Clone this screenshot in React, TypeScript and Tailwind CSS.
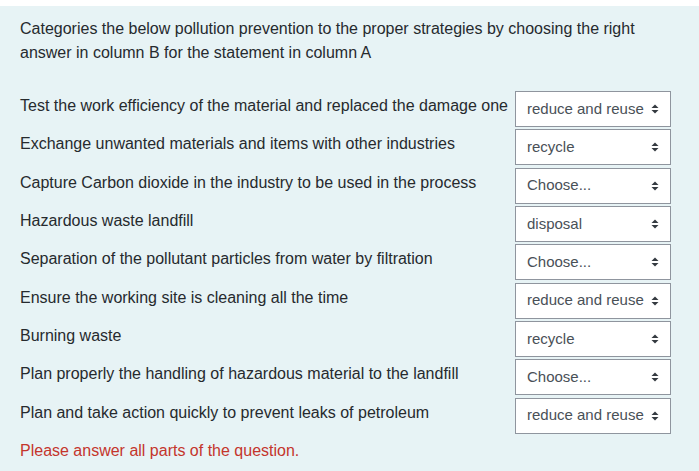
const rows: { label: string; value: string }[] = [
  { label: "Test the work efficiency of the material and replaced the damage one", value: "reduce and reuse" },
  { label: "Exchange unwanted materials and items with other industries", value: "recycle" },
  { label: "Capture Carbon dioxide in the industry to be used in the process", value: "Choose..." },
  { label: "Hazardous waste landfill", value: "disposal" },
  { label: "Separation of the pollutant particles from water by filtration", value: "Choose..." },
  { label: "Ensure the working site is cleaning all the time", value: "reduce and reuse" },
  { label: "Burning waste", value: "recycle" },
  { label: "Plan properly the handling of hazardous material to the landfill", value: "Choose..." },
  { label: "Plan and take action quickly to prevent leaks of petroleum", value: "reduce and reuse" },
];

const Arrows = () => (
  <svg width="8" height="12" viewBox="0 0 8 12" className="shrink-0">
    <path d="M4 1.5 L7.5 5 L0.5 5 Z" fill="#343a40" />
    <path d="M4 10.5 L7.5 7 L0.5 7 Z" fill="#343a40" />
  </svg>
);

const FakeSelect = ({ value }: { value: string }) => (
  <div className="w-[156px] h-[36px] shrink-0 bg-white border border-[#8f959e] flex items-center justify-between pl-[11px] pr-[11px] text-[15px] text-[#495057]">
    <span className="whitespace-nowrap">{value}</span>
    <Arrows />
  </div>
);

export default function App() {
  return (
    <div
      className="w-[699px] h-[471px] bg-white pt-[6px] overflow-hidden text-[16px]"
      style={{ fontFamily: '"Liberation Sans", Arial, sans-serif' }}
    >
      <div className="h-full bg-[#e7f3f5] pl-[20px] pt-[11px] text-[#262a2e]">
        <p className="leading-[24px] w-[630px]">
          Categories the below pollution prevention to the proper strategies by choosing the right answer in column B for the statement in column A
        </p>
        <div className="mt-[26px] flex flex-col gap-y-[2.33px]">
          {rows.map((r) => (
            <div key={r.label} className="flex items-start">
              <div className="w-[495px] pt-[4px] leading-[22px] whitespace-nowrap">{r.label}</div>
              <FakeSelect value={r.value} />
            </div>
          ))}
        </div>
        <p className="mt-[6px] leading-[22px] text-[#c4352c]">Please answer all parts of the question.</p>
      </div>
    </div>
  );
}
